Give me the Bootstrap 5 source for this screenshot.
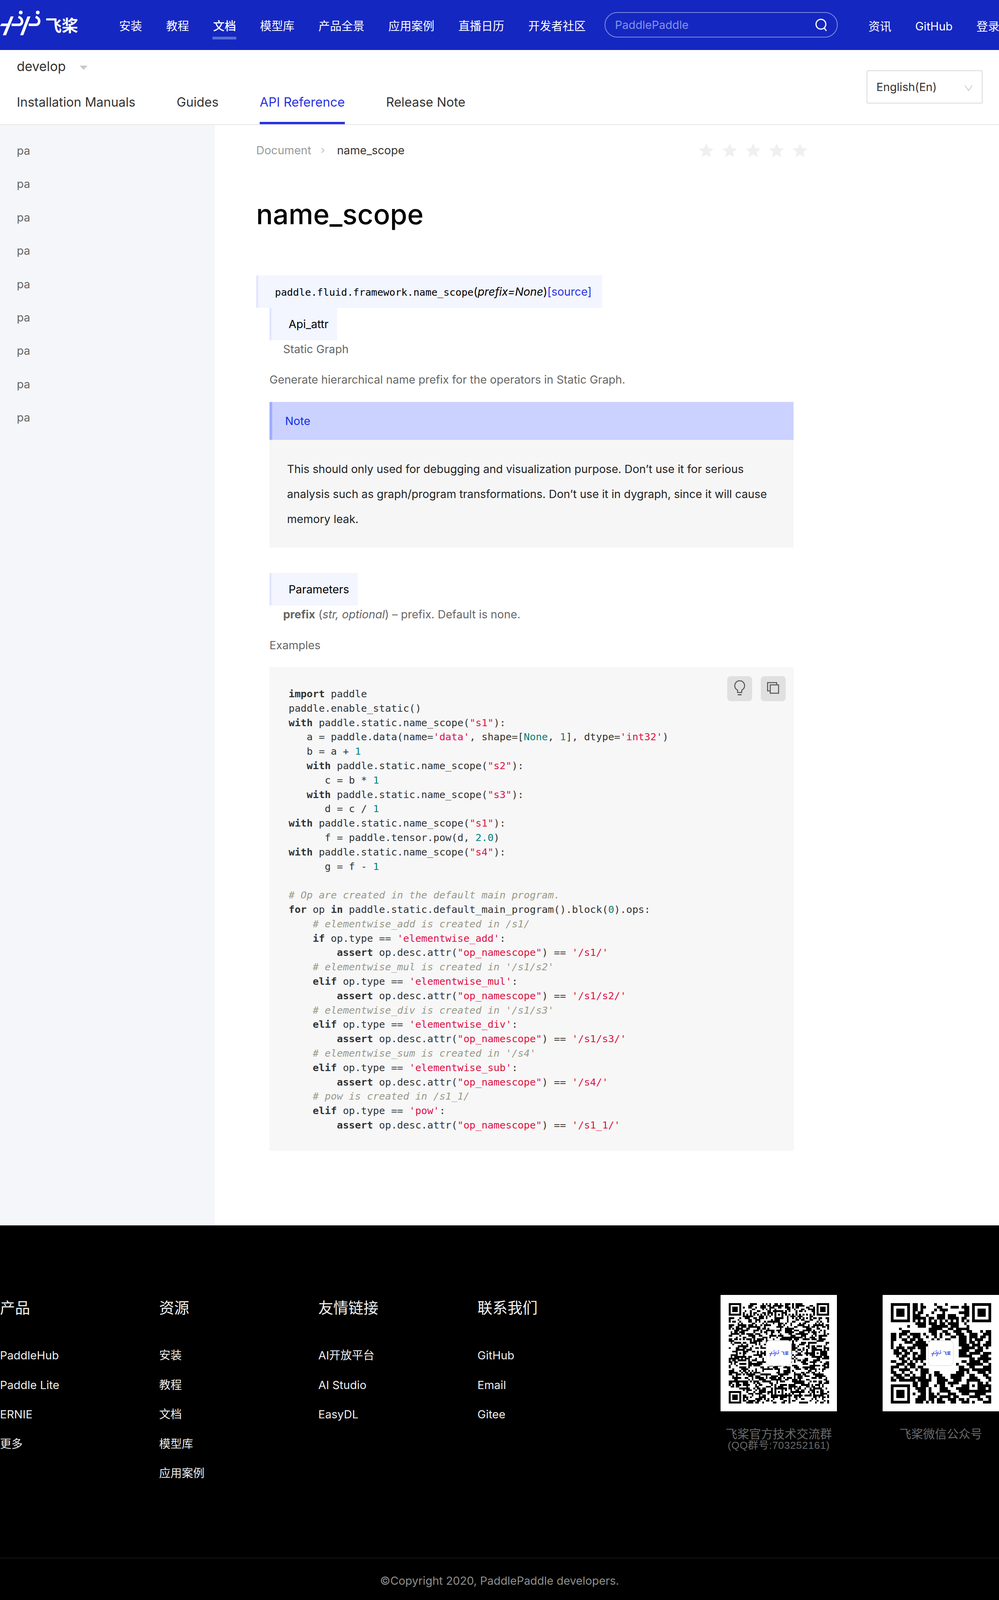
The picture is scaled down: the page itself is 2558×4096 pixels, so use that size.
<!DOCTYPE html>
<html lang="zh">
<head>
<meta charset="utf-8">
<title>name_scope</title>
<link href="https://cdn.jsdelivr.net/npm/bootstrap@5.3.0/dist/css/bootstrap.min.css" rel="stylesheet">
<style>
html,body{margin:0;background:#fff;overflow-x:hidden}
body{font-family:Inter,"Noto Sans CJK SC",sans-serif;font-size:28.7px;color:#333;width:2558px}
a{text-decoration:none;color:inherit}
.pp-top{height:128px;background:#1527c1;color:#fff;overflow:hidden}
.pp-logo{width:203px;margin-bottom:8px;flex:none}
.pp-logo svg{width:116px;height:74px;flex:none}
.pp-logotext{font-family:"Noto Sans CJK SC",sans-serif;font-weight:700;font-size:42px;line-height:1;margin-top:6px;white-space:nowrap;flex:none}
.pp-nav{margin-left:102px;margin-top:6px;gap:61.5px;font-size:29.4px;line-height:40px;flex:none}
.pp-nav a{position:relative;display:block;white-space:nowrap}
.pp-nav a.pp-on{font-weight:500}
.pp-nav a.pp-on::after{content:"";position:absolute;left:-2px;right:-1px;top:47px;height:7px;background:#5a6ed4}
.pp-search{margin-left:48px;width:597px;height:65px;border:2px solid #7f8de0;border-radius:33px;padding:0 24px 0 25px;flex:none;margin-bottom:1px}
.pp-search span{color:#8492e6;font-size:29px}
.pp-search svg{width:32px;height:34px}
.pp-right{margin-left:79px;gap:61px;font-size:29.4px;padding-top:8px;flex:none;white-space:nowrap}
.pp-sub{height:192px;border-bottom:2px solid #e6e6e6;padding:0 42px 0 43px}
.pp-ver{height:84px;font-size:33.4px;color:#333}
.pp-ver svg{width:20px;height:11px;margin-left:36px;margin-top:6px}
.pp-tabs{gap:105.5px;font-size:32.5px;color:#333}
.pp-tabs a{display:block;height:106px;line-height:100px;border-bottom:6px solid transparent;white-space:nowrap}
.pp-tabs a.pp-on{color:#2932e1;border-bottom-color:#2932e1}
.pp-lang{width:297px;height:85px;margin-top:52px;border:2px solid #dadada;border-radius:4px;padding:0 24px 0 23px;font-size:29px;color:#333}
.pp-lang svg{width:20px;height:15px;margin-top:6px}
.pp-main{height:2817px}
.pp-side{width:550px;flex:none;background:#f5f6f9;padding-top:23px}
.pp-side div{height:85.4px;line-height:85.4px;padding-left:43px;color:#666;font-size:29px}
.pp-body{padding-left:106px;width:1482px}
.pp-crumb{margin-top:41px;height:48px;width:1413px;font-size:29px;color:#999}
.pp-crumb b{font-weight:400;color:#333}
.pp-crumb svg.pp-chev{width:12px;height:16px;margin:0 30px 0 24px}
.pp-stars{gap:19px}
.pp-stars svg{width:41px;height:41px;fill:#f0f0f0}
.pp-title{margin:99px 0 0;font-size:71px;line-height:80px;font-weight:500;color:#000;height:80px}
.pp-sig{display:block;width:fit-content;margin-top:117px;height:83px;line-height:83px;background:#f3f5ff;border-left:5px solid #e0e6ff;padding:0 27px 0 43px;font-size:28.7px;color:#000;white-space:nowrap}
.pp-mono{font-family:"DejaVu Sans Mono",monospace;font-size:25.6px}
.pp-src{color:#2932e1}
.pp-dd{margin-left:34px;width:1342px}
.pp-fld{width:fit-content;height:83px;line-height:83px;background:#f3f5ff;border-left:5px solid #e0e6ff;padding:0 22px 0 44px;color:#000;font-size:28.7px}
.pp-in{padding-left:35px;height:46px;line-height:46px;color:#666;font-size:28.7px}
.pp-txt{height:46px;line-height:46px;color:#666;font-size:28.7px}
.pp-gap-a{margin-top:32px}
.pp-gap-b{margin-top:65px}
.pp-gap-c{margin-top:33px}
.pp-note{margin-top:34px}
.pp-nhead{height:97px;line-height:97px;background:#cbd2ff;border-left:7px solid #9eaeff;padding-left:33px;color:#0e2ee6;font-size:28.7px}
.pp-nbody{height:276px;background:#f6f6f6;padding:43px 60px 0 45px;line-height:64px;color:#222;font-size:28.6px}
.pp-code{position:relative;margin-top:33px;height:1238px;background:#f7f7f7;padding:50px 0 0 49px}
.pp-code pre{margin:0;font-family:"DejaVu Sans Mono",monospace;font-size:25.65px;line-height:36.8px;color:#333;overflow:visible}
.pp-code .kw{font-weight:700;color:#333}
.pp-code .st{color:#dd1144}
.pp-code .nu{color:#008080}
.pp-code .cm{color:#999988;font-style:italic}
.pp-tools{position:absolute;top:23px;right:20px;gap:22px}
.pp-tool{width:64px;height:64px;background:#e0e0e0;border-radius:9px}
.pp-tool svg{width:64px;height:64px;display:block}
.pp-foot{background:#000;height:959px;color:#fff}
.pp-ftop{height:852px;padding-top:181px;border-bottom:1px solid #2a2a2a}
.pp-fcol{width:407.5px;flex:none}
.pp-fcol h5{margin:0;height:60px;line-height:60px;font-size:38.5px;font-weight:400;color:#f2f2f2}
.pp-fcol ul{list-style:none;margin:54px 0 0;padding:0}
.pp-fcol li{height:75.5px;line-height:75.5px;font-size:29px;color:#eee;white-space:nowrap}
.pp-qrs{margin-left:auto;margin-top:-3px;gap:117px;align-items:flex-start}
.pp-qrcol{width:298px;text-align:center;flex:none}
.pp-qrbox{position:relative;width:298px;height:298px;background:#fff;padding:21px}
.pp-qrbox svg.pp-qr{display:block;width:257px;height:257px;filter:blur(.55px)}
.pp-qrmark{position:absolute;left:50%;top:50%;width:66px;height:66px;margin:-33px 0 0 -33px;background:#fff;border:2px solid #e9e9e9;border-radius:11px;color:#3346e0;gap:2px}
.pp-qrmark svg{width:29px;height:19px;flex:none}
.pp-qrmark span{font-family:"Noto Sans CJK SC",sans-serif;font-size:10px;line-height:1;font-weight:700;white-space:nowrap}
.pp-cap{margin-top:43px;font-size:30.3px;line-height:30px;color:#6a6a6a;white-space:nowrap}
.pp-cap small{display:block;font-size:26.5px;line-height:29px;letter-spacing:.6px;font-family:"Liberation Sans","Noto Sans CJK SC",sans-serif}
.pp-copy{height:106px;line-height:116px;text-align:center;font-size:28.9px;color:#8e8e8e}
</style>
</head>
<body>
<svg width="0" height="0" class="position-absolute">
  <defs>
    <symbol id="pp-mark" viewBox="0 0 360 228">
      <polygon points="85,58 108,58 48,208 22,208"/>
      <polygon points="0,135 12,115 72,115 64,135"/>
      <polygon points="218,58 242,58 185,208 160,208"/>
      <path d="M92 125H150C170 125 180 105 173 86C169 73 158 66 146 62" fill="none" stroke="currentColor" stroke-width="20"/>
      <path d="M228 125H285C305 125 315 105 310 86C306 73 296 66 283 62" fill="none" stroke="currentColor" stroke-width="20"/>
      <circle cx="165" cy="27" r="15"/>
      <circle cx="300" cy="27" r="15"/>
    </symbol>
  </defs>
</svg>

<header class="pp-top d-flex align-items-center">
  <div class="pp-logo d-flex align-items-center">
    <svg fill="#fff" color="#fff"><use href="#pp-mark"/></svg>
    <span class="pp-logotext">飞桨</span>
  </div>
  <nav class="pp-nav d-flex">
    <a href="#">安装</a><a href="#">教程</a><a href="#" class="pp-on">文档</a><a href="#">模型库</a><a href="#">产品全景</a><a href="#">应用案例</a><a href="#">直播日历</a><a href="#">开发者社区</a>
  </nav>
  <div class="pp-search d-flex align-items-center justify-content-between">
    <span>PaddlePaddle</span>
    <svg viewBox="0 0 32 34" fill="none" stroke="#fff" stroke-width="3"><circle cx="15" cy="15" r="12.5"/><path d="M23 24l6 8"/></svg>
  </div>
  <div class="pp-right d-flex">
    <a href="#">资讯</a><a href="#">GitHub</a><a href="#">登录</a>
  </div>
</header>

<section class="pp-sub d-flex justify-content-between">
  <div>
    <div class="pp-ver d-flex align-items-center">develop
      <svg viewBox="0 0 20 11"><polygon points="0,0 20,0 10,11" fill="#c8c8c8"/></svg>
    </div>
    <div class="pp-tabs d-flex">
      <a href="#">Installation Manuals</a><a href="#">Guides</a><a href="#" class="pp-on">API Reference</a><a href="#">Release Note</a>
    </div>
  </div>
  <div class="pp-lang d-flex align-items-center justify-content-between">
    <span>English(En)</span>
    <svg viewBox="0 0 20 15" fill="none" stroke="#bbb" stroke-width="1.5"><path d="M1 1l9 13 9-13"/></svg>
  </div>
</section>

<main class="pp-main d-flex">
  <aside class="pp-side">
    <div>pa</div><div>pa</div><div>pa</div><div>pa</div><div>pa</div><div>pa</div><div>pa</div><div>pa</div><div>pa</div>
  </aside>
  <article class="pp-body">
    <div class="pp-crumb d-flex align-items-center">
      <span>Document</span>
      <svg class="pp-chev" viewBox="0 0 12 16" fill="none" stroke="#aaa" stroke-width="1.6"><path d="M2 2l7 6-7 6"/></svg>
      <b>name_scope</b>
      <div class="pp-stars d-flex ms-auto">
        <svg viewBox="0 0 24 24"><path d="M12 1l3.2 7.3 7.8.8-5.9 5.2 1.7 7.7L12 18l-6.8 4 1.7-7.7L1 9.1l7.8-.8z"/></svg>
        <svg viewBox="0 0 24 24"><path d="M12 1l3.2 7.3 7.8.8-5.9 5.2 1.7 7.7L12 18l-6.8 4 1.7-7.7L1 9.1l7.8-.8z"/></svg>
        <svg viewBox="0 0 24 24"><path d="M12 1l3.2 7.3 7.8.8-5.9 5.2 1.7 7.7L12 18l-6.8 4 1.7-7.7L1 9.1l7.8-.8z"/></svg>
        <svg viewBox="0 0 24 24"><path d="M12 1l3.2 7.3 7.8.8-5.9 5.2 1.7 7.7L12 18l-6.8 4 1.7-7.7L1 9.1l7.8-.8z"/></svg>
        <svg viewBox="0 0 24 24"><path d="M12 1l3.2 7.3 7.8.8-5.9 5.2 1.7 7.7L12 18l-6.8 4 1.7-7.7L1 9.1l7.8-.8z"/></svg>
      </div>
    </div>
    <h1 class="pp-title">name_scope</h1>
    <div class="pp-sig"><span class="pp-mono">paddle.fluid.framework.name_scope</span>(<em>prefix=None</em>)<a href="#" class="pp-src">[source]</a></div>
    <div class="pp-dd">
      <div class="pp-fld">Api_attr</div>
      <div class="pp-in">Static Graph</div>
      <div class="pp-txt pp-gap-a">Generate hierarchical name prefix for the operators in Static Graph.</div>
      <div class="pp-note">
        <div class="pp-nhead">Note</div>
        <div class="pp-nbody">This should only used for debugging and visualization purpose. Don’t use it for serious analysis such as graph/program transformations. Don’t use it in dygraph, since it will cause memory leak.</div>
      </div>
      <div class="pp-fld pp-gap-b">Parameters</div>
      <div class="pp-in"><b class="fw-bold">prefix</b> (<em>str, optional</em>) – prefix. Default is none.</div>
      <div class="pp-txt pp-gap-c">Examples</div>
      <div class="pp-code">
        <div class="pp-tools d-flex">
          <div class="pp-tool"><svg viewBox="0 0 66 66" fill="none" stroke="#555" stroke-width="2.6"><path d="M27.5 36.8A13 13 0 1 1 38.5 36.8V43H27.5Z"/><path d="M28 49H38" stroke-width="3"/></svg></div>
          <div class="pp-tool"><svg viewBox="0 0 66 66" fill="none" stroke="#555" stroke-width="2.6"><path d="M25 39H18V17H42V23"/><rect x="25" y="23" width="22" height="22"/></svg></div>
        </div>
<pre><span class="kw">import</span> paddle
paddle.enable_static()
<span class="kw">with</span> paddle.static.name_scope(<span class="st">"s1"</span>):
   a = paddle.data(name=<span class="st">'data'</span>, shape=[<span class="nu">None</span>, <span class="nu">1</span>], dtype=<span class="st">'int32'</span>)
   b = a + <span class="nu">1</span>
   <span class="kw">with</span> paddle.static.name_scope(<span class="st">"s2"</span>):
      c = b * <span class="nu">1</span>
   <span class="kw">with</span> paddle.static.name_scope(<span class="st">"s3"</span>):
      d = c / <span class="nu">1</span>
<span class="kw">with</span> paddle.static.name_scope(<span class="st">"s1"</span>):
      f = paddle.tensor.pow(d, <span class="nu">2.0</span>)
<span class="kw">with</span> paddle.static.name_scope(<span class="st">"s4"</span>):
      g = f - <span class="nu">1</span>

<span class="cm"># Op are created in the default main program.</span>
<span class="kw">for</span> op <span class="kw">in</span> paddle.static.default_main_program().block(<span class="nu">0</span>).ops:
    <span class="cm"># elementwise_add is created in /s1/</span>
    <span class="kw">if</span> op.type == <span class="st">'elementwise_add'</span>:
        <span class="kw">assert</span> op.desc.attr(<span class="st">"op_namescope"</span>) == <span class="st">'/s1/'</span>
    <span class="cm"># elementwise_mul is created in '/s1/s2'</span>
    <span class="kw">elif</span> op.type == <span class="st">'elementwise_mul'</span>:
        <span class="kw">assert</span> op.desc.attr(<span class="st">"op_namescope"</span>) == <span class="st">'/s1/s2/'</span>
    <span class="cm"># elementwise_div is created in '/s1/s3'</span>
    <span class="kw">elif</span> op.type == <span class="st">'elementwise_div'</span>:
        <span class="kw">assert</span> op.desc.attr(<span class="st">"op_namescope"</span>) == <span class="st">'/s1/s3/'</span>
    <span class="cm"># elementwise_sum is created in '/s4'</span>
    <span class="kw">elif</span> op.type == <span class="st">'elementwise_sub'</span>:
        <span class="kw">assert</span> op.desc.attr(<span class="st">"op_namescope"</span>) == <span class="st">'/s4/'</span>
    <span class="cm"># pow is created in /s1_1/</span>
    <span class="kw">elif</span> op.type == <span class="st">'pow'</span>:
        <span class="kw">assert</span> op.desc.attr(<span class="st">"op_namescope"</span>) == <span class="st">'/s1_1/'</span></pre>
      </div>
    </div>
  </article>
</main>

<footer class="pp-foot">
  <div class="pp-ftop d-flex">
    <div class="pp-fcol"><h5>产品</h5><ul><li>PaddleHub</li><li>Paddle Lite</li><li>ERNIE</li><li>更多</li></ul></div>
    <div class="pp-fcol"><h5>资源</h5><ul><li>安装</li><li>教程</li><li>文档</li><li>模型库</li><li>应用案例</li></ul></div>
    <div class="pp-fcol"><h5>友情链接</h5><ul><li>AI开放平台</li><li>AI Studio</li><li>EasyDL</li></ul></div>
    <div class="pp-fcol"><h5>联系我们</h5><ul><li>GitHub</li><li>Email</li><li>Gitee</li></ul></div>
    <div class="pp-qrs d-flex">
      <div class="pp-qrcol">
        <div class="pp-qrbox">
          <svg class="pp-qr" id="pp-qr1" shape-rendering="crispEdges"><path fill="#000"/></svg>
          <div class="pp-qrmark d-flex align-items-center justify-content-center"><svg fill="#3346e0" color="#3346e0"><use href="#pp-mark"/></svg><span>飞桨</span></div>
        </div>
        <div class="pp-cap">飞桨官方技术交流群<small>(QQ群号:703252161)</small></div>
      </div>
      <div class="pp-qrcol">
        <div class="pp-qrbox">
          <svg class="pp-qr" id="pp-qr2" shape-rendering="crispEdges"><path fill="#000"/></svg>
          <div class="pp-qrmark d-flex align-items-center justify-content-center"><svg fill="#3346e0" color="#3346e0"><use href="#pp-mark"/></svg><span>飞桨</span></div>
        </div>
        <div class="pp-cap">飞桨微信公众号</div>
      </div>
    </div>
  </div>
  <div class="pp-copy">©Copyright 2020, PaddlePaddle developers.</div>
</footer>

<script>
(function(){
  function draw(id,n,cell,aligns){
    var s=document.getElementById(id);
    s.setAttribute('viewBox','0 0 '+n+' '+n);
    function finder(cx,cy){
      for(var y=-1;y<8;y++)for(var x=-1;x<8;x++){
        var X=cx+x,Y=cy+y;
        if(X<0||Y<0||X>=n||Y>=n)continue;
        var on=x>=0&&x<7&&y>=0&&y<7&&(x==0||x==6||y==0||y==6||(x>=2&&x<=4&&y>=2&&y<=4));
        cell[Y][X]=on?1:0;
      }
    }
    for(var i=8;i<n-8;i++){cell[6][i]=i%2?0:1;cell[i][6]=i%2?0:1;}
    aligns.forEach(function(a){
      for(var y=-2;y<=2;y++)for(var x=-2;x<=2;x++){
        cell[a[1]+y][a[0]+x]=(Math.max(Math.abs(x),Math.abs(y))!=1)?1:0;
      }
    });
    finder(0,0);finder(n-7,0);finder(0,n-7);
    var d='';
    for(var y=0;y<n;y++)for(var x=0;x<n;x++)if(cell[y][x])d+='M'+x+' '+y+'h1v1h-1z';
    s.querySelector('path').setAttribute('d',d);
  }
  var n=57,c=[],seed=20,prev=0;
  for(var y=0;y<n;y++){c[y]=[];for(var x=0;x<n;x++){seed=(seed*1103515245+12345)&0x7fffffff;var r=(seed>>>12)%100;prev=r<(prev?58:44)?1:0;c[y][x]=prev;}}
  draw('pp-qr1',n,c,[[6,28],[28,6],[28,28],[28,50],[50,28],[50,50]]);
  var rows=["8-9 11 16 20 27","8-9 11-12 17-18 22-24 26-28","8-9 11 16 18-20 27-28","8 10-11 15 19 25-28","8-10 13 17-19 21-23 27-28","8-12 14-15 17-19 21-24 26-27","","9-12 14-16 18-19 21-24 27","10-12 15-20 22-24 28","3 6 14-18 21-22 24-28","4-6 14-16 19-20 23-25 28-29 33 35-36","0-1 3-5 7-10 12 15-16 18 20-21 24-26 29-31 34-36","0-1 3 8-10 13 16 18 22-23 25-27 29-31 33-34 36","0-1 4-8 10-11 15 17 20-21 25-27 29 31-33 36","0 5-7 9-12 14 25-27 29-30 32 35-36","0 3 8-13 25-28 30-32 34-36","0 2-4 6-8 10-12 26-30 32-33 35","1-2 4-5 7 11-12 25-28 31-33","1-3 5-6 8-9 11-12 25-27 29-32 34-36","2 4-5 8 10-12 25-29 33-35","3-4 6 8-12 29-30 32-36","0-1 4-5 7 9 11 26-27 29-32 34-35","2-4 6-8 12 24 28-33 36","0-2 5-8 10-11 25-26 29-30 34-36","0 3-6 9 11-13 25-28 30-36","0-1 4 6-7 11-13 16-17 24-26 28 32-34 36","1-3 5-6 8 11-12 14 16-18 22-26 29-30 34-35","0 2-4 7-12 14 17-19 22-25 29-31 35-36","0-1 3-8 10-14 17-20 23-25 28-32 36","1-2 4 7-9 11-13 17-19 21-24 28-33 35","8-9 11-13 16 18-19 22 26-28 33-36","9-12 14 18-20 24-27 33-34 36","10-12 14 18-21 25-27 33-36","8 11-12 14-15 17 21-23 26-28 31-34","10-12 14-16 18-21 23-24 29-32 35-36","9-12 14-15 17-18 21-23 25-26 28 32-33 36","9-11 13 15 17-19 22-23 26-28 30 34-36"];
  var m=rows.map(function(t){var a=[];for(var i=0;i<37;i++)a[i]=0;t.split(' ').forEach(function(p){if(!p)return;var q=p.split('-'),b=+q[0],e=+(q[1]||q[0]);for(var i=b;i<=e;i++)a[i]=1;});return a;});
  draw('pp-qr2',37,m,[[30,30]]);
})();
</script>
<script src="https://cdn.jsdelivr.net/npm/bootstrap@5.3.0/dist/js/bootstrap.bundle.min.js"></script>
</body>
</html>
